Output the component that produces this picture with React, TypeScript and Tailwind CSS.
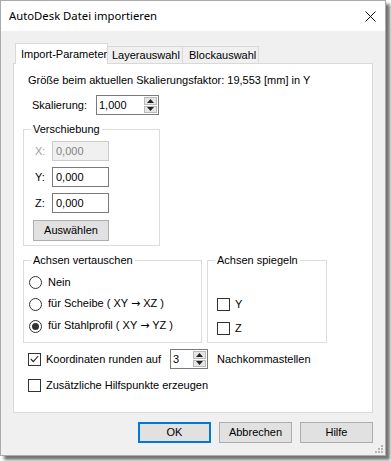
import React from 'react';

const Check = ({ checked = false }: { checked?: boolean }) => (
  <span className="flex h-[13px] w-[13px] shrink-0 items-center justify-center border border-[#333333] bg-white">
    {checked && (
      <svg width="9" height="8" viewBox="0 0 9 8">
        <path d="M0.8 4 L3.3 6.6 L8.2 1" stroke="#222" strokeWidth="1.1" fill="none" />
      </svg>
    )}
  </span>
);

const Radio = ({ checked = false }: { checked?: boolean }) => (
  <span className="flex h-[13px] w-[13px] shrink-0 items-center justify-center rounded-full border border-[#333333] bg-white">
    {checked && <span className="h-[7px] w-[7px] rounded-full bg-[#333333]" />}
  </span>
);

const Spin = ({ value, width }: { value: string; width: string }) => (
  <div className={`flex h-[20px] ${width} border border-[#7a7a7a] bg-white`}>
    <div className="flex-1 pl-[2px] leading-[18px]">{value}</div>
    <div className="flex w-[15px] flex-col gap-px p-px">
      <div className="flex flex-1 items-center justify-center border border-[#b9b9b9] bg-[#e6e6e6]">
        <svg width="7" height="4" viewBox="0 0 7 4">
          <path d="M0 4 L3.5 0 L7 4 Z" fill="#222" />
        </svg>
      </div>
      <div className="flex flex-1 items-center justify-center border border-[#b9b9b9] bg-[#e6e6e6]">
        <svg width="7" height="4" viewBox="0 0 7 4">
          <path d="M0 0 L3.5 4 L7 0 Z" fill="#222" />
        </svg>
      </div>
    </div>
  </div>
);

const Field = ({ label, value, disabled = false }: { label: string; value: string; disabled?: boolean }) => (
  <div className="flex h-[20px] items-center">
    <span className={`w-[17px] ${disabled ? 'text-[#a0a0a0]' : ''}`}>{label}</span>
    <div
      className={`h-[20px] w-[57px] border pl-[3px] leading-[18px] ${
        disabled ? 'border-[#cccccc] bg-[#f0f0f0] text-[#838383]' : 'border-[#7a7a7a] bg-white'
      }`}
    >
      {value}
    </div>
  </div>
);

const Button = ({ label, primary = false, className = '' }: { label: string; primary?: boolean; className?: string }) => (
  <div
    className={`flex h-[21px] items-center justify-center bg-[#e1e1e1] ${
      primary ? 'border-2 border-[#0078d7]' : 'border border-[#adadad]'
    } ${className}`}
  >
    {label}
  </div>
);

const Group = ({ title, className, children }: { title: string; className: string; children: React.ReactNode }) => (
  <div className={`relative border border-[#dcdcdc] ${className}`}>
    <span className="absolute -top-[8px] left-[7px] bg-white px-[2px] leading-[14px]">{title}</span>
    {children}
  </div>
);

const Arrow = () => <span className="font-['DejaVu_Sans',sans-serif] text-[11px]">→</span>;

export default function App() {
  return (
    <div className="h-[461px] w-[391px] bg-white font-['Liberation_Sans',Arial,sans-serif] text-[11px] text-black">
      <div className="relative flex h-[456px] w-[386px] flex-col border border-[#aaaaaa] shadow-[4px_4px_3px_rgba(0,0,0,0.55)]">
        {/* title bar */}
        <div className="flex h-[30px] items-center justify-between bg-white pl-[8px] pr-[9px]">
          <span className="font-['Noto_Sans',sans-serif] text-[11.3px]">AutoDesk Datei importieren</span>
          <svg width="11" height="11" viewBox="0 0 11 11">
            <path d="M0.5 0.5 L10.5 10.5 M10.5 0.5 L0.5 10.5" stroke="#111" strokeWidth="1" />
          </svg>
        </div>

        <div className="flex flex-1 flex-col bg-[#f0f0f0] px-[12px] pt-[12px]">
          {/* tabs */}
          <div className="flex items-end whitespace-nowrap pl-[2px]">
            <div className="relative z-10 -mb-px flex h-[21px] w-[93px] items-center border border-b-0 border-[#d9d9d9] bg-white pl-[5px]">
              Import-Parameter
            </div>
            <div className="flex h-[17px] w-[75px] items-center border border-l-0 border-b-0 border-[#d9d9d9] pl-[4px]">
              Layerauswahl
            </div>
            <div className="flex h-[17px] w-[76px] items-center border border-l-0 border-b-0 border-[#d9d9d9] pl-[6px]">
              Blockauswahl
            </div>
          </div>

          {/* panel */}
          <div className="flex h-[350px] flex-col border border-[#d9d9d9] bg-white">
            <div className="ml-[14px] mt-[9px] h-[14px] leading-[14px]">
              Größe beim aktuellen Skalierungsfaktor: 19,553 [mm] in Y
            </div>

            <div className="ml-[18px] mt-[8px] flex h-[20px] items-center">
              <span className="w-[64px]">Skalierung:</span>
              <Spin value="1,000" width="w-[63px]" />
            </div>

            <Group title="Verschiebung" className="ml-[9px] mt-[14px] h-[117px] w-[137px]">
              <div className="flex flex-col pl-[11px] pt-[11px]">
                <div className="flex flex-col gap-[6px]">
                  <Field label="X:" value="0,000" disabled />
                  <Field label="Y:" value="0,000" />
                  <Field label="Z:" value="0,000" />
                </div>
                <Button label="Auswählen" className="-ml-[2px] mt-[7px] w-[76px]" />
              </div>
            </Group>

            <div className="ml-[9px] mt-[14px] flex gap-[5px]">
              <Group title="Achsen vertauschen" className="h-[83px] w-[179px]">
                <div className="flex flex-col pl-[5px] pt-[10px]">
                  <div className="flex h-[22px] items-center gap-[6px]">
                    <Radio />
                    <span>Nein</span>
                  </div>
                  <div className="flex h-[22px] items-center gap-[6px]">
                    <Radio />
                    <span>
                      für Scheibe ( XY <Arrow /> XZ )
                    </span>
                  </div>
                  <div className="flex h-[22px] items-center gap-[6px]">
                    <Radio checked />
                    <span>
                      für Stahlprofil ( XY <Arrow /> YZ )
                    </span>
                  </div>
                </div>
              </Group>
              <Group title="Achsen spiegeln" className="h-[83px] w-[120px]">
                <div className="flex flex-col pl-[9px] pt-[31px]">
                  {['Y', 'Z'].map((a) => (
                    <div key={a} className="flex h-[24px] items-center gap-[5px]">
                      <Check />
                      <span>{a}</span>
                    </div>
                  ))}
                </div>
              </Group>
            </div>

            <div className="ml-[14px] mt-[6px] flex h-[20px] items-center">
              <Check checked />
              <span className="ml-[5px] w-[124px]">Koordinaten runden auf</span>
              <Spin value="3" width="w-[38px]" />
              <span className="ml-[9px]">Nachkommastellen</span>
            </div>

            <div className="ml-[14px] mt-[6px] flex h-[20px] items-center">
              <Check />
              <span className="ml-[5px]">Zusätzliche Hilfspunkte erzeugen</span>
            </div>
          </div>

          {/* buttons */}
          <div className="mt-[9px] flex justify-end gap-[8px]">
            <Button label="OK" primary className="w-[73px]" />
            <Button label="Abbrechen" className="w-[73px]" />
            <Button label="Hilfe" className="w-[73px]" />
          </div>
        </div>

        {/* size grip */}
        <svg className="absolute bottom-[1px] right-[1px]" width="9" height="9" viewBox="0 0 9 9">
          <g fill="#b5b5b5">
            <rect x="6" y="0" width="2" height="2" />
            <rect x="3" y="3" width="2" height="2" />
            <rect x="6" y="3" width="2" height="2" />
            <rect x="0" y="6" width="2" height="2" />
            <rect x="3" y="6" width="2" height="2" />
            <rect x="6" y="6" width="2" height="2" />
          </g>
        </svg>
      </div>
    </div>
  );
}
